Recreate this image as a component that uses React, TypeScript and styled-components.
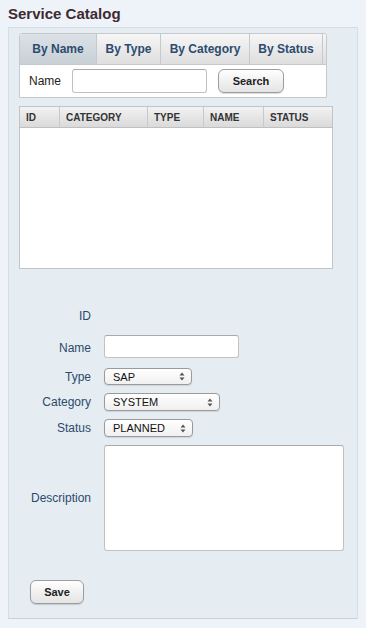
import styled, { createGlobalStyle, css } from "styled-components";

const GlobalStyle = createGlobalStyle`
  body {
    margin: 0;
    background: #edf3f9;
    font-family: "Liberation Sans", Arial, sans-serif;
  }
`

const Page = styled.div`
  width: 366px;
  height: 628px;
  padding: 0 8px;
  box-sizing: border-box;
`

const Title = styled.h1`
  margin: 0;
  height: 27px;
  line-height: 27px;
  font-size: 15px;
  font-weight: bold;
  color: #3d2a30;
`

const Panel = styled.div`
  width: 350px;
  box-sizing: border-box;
  background: #e5ecf2;
  border: 1px solid #d6dee5;
  border-bottom-color: #c9d0d6;
  padding: 5px 0 14px 10px;
`

const Tabs = styled.div`
  width: 308px;
  box-sizing: border-box;
  border: 1px solid #c4c9ce;
  border-radius: 3px 3px 0 0;
  background: #fff;
`

const TabBar = styled.div`
  display: flex;
  height: 30px;
  background: linear-gradient(#f6f6f6, #dedede);
  border-bottom: 1px solid #c4c9ce;
  border-radius: 3px 3px 0 0;
`

const Tab = styled.div<{ active?: boolean; width: number }>`
  width: ${p => p.width}px;
  display: flex;
  align-items: center;
  justify-content: center;
  font-size: 12px;
  font-weight: bold;
  color: #2b4c6f;
  border-right: 1px solid #c4c9ce;
  box-sizing: border-box;
  ${p => p.active && css`
    background: linear-gradient(#dbe1e6, #c8d0d6);
    border-radius: 3px 0 0 0;
  `}
`

const SearchRow = styled.div`
  display: flex;
  align-items: center;
  height: 32px;
  padding-left: 9px;
`

const RowLabel = styled.span`
  font-size: 12px;
  color: #222;
  width: 43px;
`

const TextInput = styled.input<{ width: number; height: number }>`
  width: ${p => p.width}px;
  height: ${p => p.height}px;
  box-sizing: border-box;
  border: 1px solid #c2c2c2;
  border-top-color: #a9a9a9;
  border-radius: 3px;
  background: #fff;
  margin: 0;
`

const Button = styled.button<{ width: number }>`
  width: ${p => p.width}px;
  height: 24px;
  box-sizing: border-box;
  border: 1px solid #9d9d9d;
  border-radius: 6px;
  background: linear-gradient(#ffffff, #f1f1f1 50%, #e4e4e4);
  box-shadow: 0 1px 1px rgba(0, 0, 0, 0.15);
  font-family: "Liberation Sans", Arial, sans-serif;
  font-size: 11px;
  font-weight: bold;
  color: #222;
  padding: 0;
`

const SearchButton = styled(Button)`
  margin-left: 11px;
`

const Table = styled.div`
  margin-top: 8px;
  width: 314px;
  height: 163px;
  box-sizing: border-box;
  border: 1px solid #c4c4c4;
  background: #fff;
`

const HeadRow = styled.div`
  display: flex;
  height: 20px;
  background: linear-gradient(#f2f2f2, #dadada);
  border-bottom: 1px solid #c0c0c0;
`

const HeadCell = styled.div<{ width: number }>`
  width: ${p => p.width}px;
  flex: none;
  box-sizing: border-box;
  padding-left: 6px;
  display: flex;
  align-items: center;
  font-size: 10px;
  font-weight: bold;
  color: #333;
  border-right: 1px solid #c8c8c8;
  &:last-child {
    border-right: none;
    flex: 1;
  }
`

const Form = styled.div`
  margin-top: 36px;
  display: grid;
  grid-template-columns: 72px auto;
  column-gap: 13px;
  row-gap: 8px;
  grid-template-rows: 22px 25px 17px 18px 18px 106px;
`

const Label = styled.label`
  align-self: center;
  text-align: right;
  font-size: 12px;
  color: #2d4a6b;
`

const Field = styled.div`
  display: flex;
  align-items: flex-start;
`

const SelectBox = styled.div<{ width: number }>`
  width: ${p => p.width}px;
  height: 100%;
  box-sizing: border-box;
  display: flex;
  align-items: center;
  justify-content: space-between;
  padding: 0 6px 0 8px;
  border: 1px solid #9a9a9a;
  border-radius: 4px;
  background: linear-gradient(#ffffff, #f0f0f0);
  box-shadow: 0 1px 1px rgba(0, 0, 0, 0.1);
  font-size: 11px;
  color: #111;
`

const TextArea = styled.textarea`
  width: 240px;
  height: 106px;
  box-sizing: border-box;
  border: 1px solid #c2c2c2;
  border-top-color: #a9a9a9;
  border-radius: 3px;
  background: #fff;
  margin: 0;
  resize: none;
`

const Actions = styled.div`
  margin-top: 29px;
  padding-left: 11px;
`

const Arrows = () => (
  <svg width="6" height="9" viewBox="0 0 6 9">
    <path d="M3 0.5 L5.5 3.5 H0.5 Z M3 8.5 L5.5 5.5 H0.5 Z" fill="#555" />
  </svg>
)

const Select = ({ value, width }: { value: string; width: number }) => (
  <SelectBox width={width}>
    <span>{value}</span>
    <Arrows />
  </SelectBox>
)

const App = () => {
  return (
    <>
      <GlobalStyle />
      <Page>
        <Title>Service Catalog</Title>
        <Panel>
          <Tabs>
            <TabBar>
              <Tab active width={77}>By Name</Tab>
              <Tab width={64}>By Type</Tab>
              <Tab width={89}>By Category</Tab>
              <Tab width={73}>By Status</Tab>
            </TabBar>
            <SearchRow>
              <RowLabel>Name</RowLabel>
              <TextInput width={135} height={24} />
              <SearchButton width={66}>Search</SearchButton>
            </SearchRow>
          </Tabs>

          <Table>
            <HeadRow>
              <HeadCell width={40}>ID</HeadCell>
              <HeadCell width={88}>CATEGORY</HeadCell>
              <HeadCell width={56}>TYPE</HeadCell>
              <HeadCell width={60}>NAME</HeadCell>
              <HeadCell width={70}>STATUS</HeadCell>
            </HeadRow>
          </Table>

          <Form>
            <Label>ID</Label>
            <Field />
            <Label>Name</Label>
            <Field>
              <TextInput width={135} height={23} />
            </Field>
            <Label>Type</Label>
            <Field>
              <Select value="SAP" width={88} />
            </Field>
            <Label>Category</Label>
            <Field>
              <Select value="SYSTEM" width={116} />
            </Field>
            <Label>Status</Label>
            <Field>
              <Select value="PLANNED" width={89} />
            </Field>
            <Label>Description</Label>
            <Field>
              <TextArea />
            </Field>
          </Form>

          <Actions>
            <Button width={54}>Save</Button>
          </Actions>
        </Panel>
      </Page>
    </>
  )
}

export default App;
